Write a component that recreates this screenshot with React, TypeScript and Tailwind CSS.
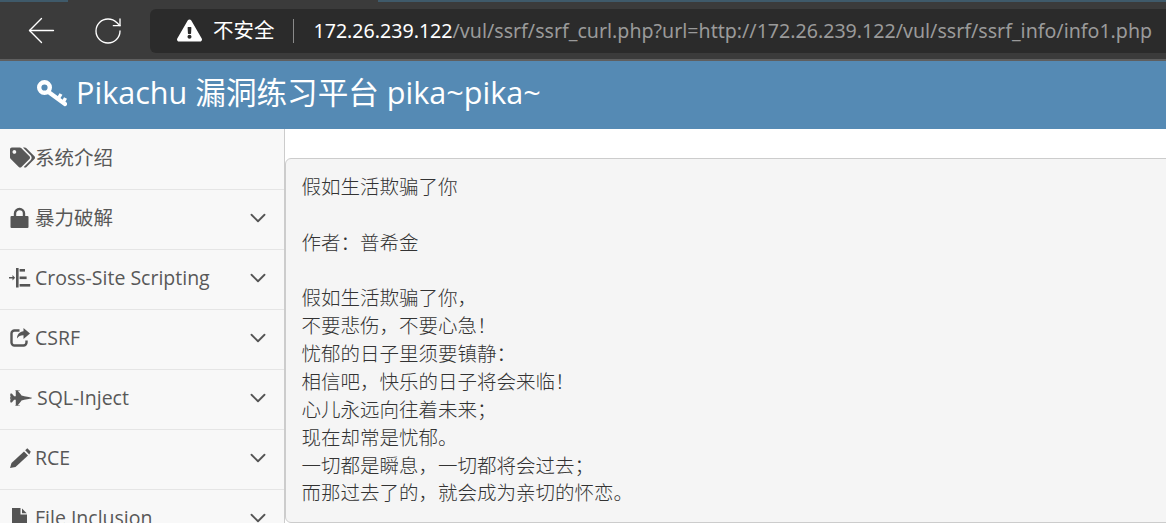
import { ArrowLeft, ChevronDown, RotateCw } from "lucide-react";
import { FaExclamationTriangle, FaFighterJet, FaTags } from "react-icons/fa";
import type { ReactNode } from "react";

const LockIcon = () => (
  <svg viewBox="0 0 19 21" className="h-[21px] w-[19px]" fill="#555">
    <path d="M5 9V6.5a4.5 4.5 0 0 1 9 0V9" fill="none" stroke="#555" strokeWidth="2.4" />
    <rect x="0.5" y="9" width="18" height="12" rx="1" />
  </svg>
);

const IndentIcon = () => (
  <svg viewBox="0 0 22 20" className="-ml-px h-[20px] w-[22px]" fill="#555">
    <rect x="0" y="9" width="4" height="1.5" />
    <path d="M3.5 7l2.6 2.8-2.6 2.8z" />
    <rect x="7" y="0" width="2.6" height="19.5" />
    <rect x="10.6" y="1" width="5.4" height="2.6" />
    <rect x="10.6" y="8.5" width="7" height="2.6" />
    <rect x="10.6" y="16" width="10.6" height="2.6" />
  </svg>
);

const ShareIcon = () => (
  <svg viewBox="0 0 20 20" className="h-[20px] w-[20px]" fill="#555">
    <path d="M16.5 12.5v2a3 3 0 0 1-3 3h-9a3 3 0 0 1-3-3v-9a3 3 0 0 1 3-3h5" fill="none" stroke="#555" strokeWidth="2.4" />
    <path d="M20 5.5L13.5 0v3.2C9.5 3.500 7 6.500 7 10.500c1.700-2.400 3.700-3.300 6.500-3.200V11z" />
  </svg>
);

const PencilIcon = () => (
  <svg viewBox="0 0 21 20" className="h-[20px] w-[21px]" fill="#555">
    <path d="M0 20l1.500-5L14 3.500l4 4L5.500 19z" />
    <path d="M15.200 2.300L17.300 0.300l3.500 3.400L19.200 6.500z" />
  </svg>
);

const FileIcon = () => (
  <svg viewBox="0 0 15 20" className="ml-[2px] h-[20px] w-[15px]" fill="#555">
    <path d="M0 0h8.500v6.500H15V20H0z" />
    <path d="M10 0.500l4.700 4.700H10z" />
  </svg>
);

const KeyIcon = () => (
  <svg viewBox="0 0 30 28" className="h-[28px] w-[30px]" fill="none" stroke="#fff">
    <circle cx="7.500" cy="8.500" r="5.300" strokeWidth="4.400" />
    <path d="M11.500 13L28 25" strokeWidth="4.200" strokeLinecap="round" />
    <path d="M21 20l3-5M26 23.500l2.500-4.500" strokeWidth="3.400" />
  </svg>
);

type Item = { icon: ReactNode; label: string; gap: string; arrow: boolean; rowH: string };

const items: Item[] = [
  { icon: <FaTags className="h-[21px] w-[25px]" />, label: "系统介绍", gap: "ml-0", arrow: false, rowH: "h-[61px] pb-[3px]" },
  { icon: <LockIcon />, label: "暴力破解", gap: "ml-[6px]", arrow: true, rowH: "h-[60px] pb-[4px]" },
  { icon: <IndentIcon />, label: "Cross-Site Scripting", gap: "ml-[4px]", arrow: true, rowH: "h-[60px] pb-[4px]" },
  { icon: <ShareIcon />, label: "CSRF", gap: "ml-[5px]", arrow: true, rowH: "h-[60px] pb-[4px]" },
  { icon: <FaFighterJet className="h-[20px] w-[22px]" />, label: "SQL-Inject", gap: "ml-[5px]", arrow: true, rowH: "h-[60px] pb-[4px]" },
  { icon: <PencilIcon />, label: "RCE", gap: "ml-[4px]", arrow: true, rowH: "h-[60px] pb-[4px]" },
  { icon: <FileIcon />, label: "File Inclusion", gap: "ml-[8px]", arrow: true, rowH: "h-[60px] pb-[4px]" },
];

const poem = `假如生活欺骗了你

作者：普希金

假如生活欺骗了你，
不要悲伤，不要心急！
忧郁的日子里须要镇静：
相信吧，快乐的日子将会来临！
心儿永远向往着未来；
现在却常是忧郁。
一切都是瞬息，一切都将会过去；
而那过去了的，就会成为亲切的怀恋。`;

export default function App() {
  return (
    <div className="h-[523px] w-[1166px] overflow-hidden bg-white font-['Open_Sans','Noto_Sans_CJK_SC',sans-serif]">
      {/* browser toolbar */}
      <div className="border-b-2 border-[#5f5f5f] bg-[#3b3b3b]">
        <div className="flex h-[2px]">
          <div className="w-[68px] bg-[#3f5a6a]" />
          <div className="w-[310px]" />
          <div className="flex-1 bg-[#3f5a6a]" />
        </div>
        <div className="flex h-[57px] items-center">
          <ArrowLeft className="ml-[21px] h-[41px] w-[41px] text-white" strokeWidth={0.8} />
          <RotateCw className="ml-[30px] h-[32px] w-[32px] text-white" strokeWidth={1} />
          <div className="ml-[26px] flex h-[44px] flex-1 items-center rounded-l-[6px] bg-[#2b2b2b] pl-[27px] font-['Noto_Sans','Noto_Sans_CJK_SC',sans-serif]">
            <FaExclamationTriangle className="h-[23px] w-[25px] text-white" />
            <span className="ml-[11px] text-[20.5px] text-white">不安全</span>
            <span className="ml-[18px] h-[24px] w-px bg-[#8a8a8a]" />
            <span className="ml-[20px] text-[19.6px] whitespace-nowrap text-white">
              172.26.239.122
              <span className="text-[#9a9a9a]">/vul/ssrf/ssrf_curl.php?url=http://172.26.239.122/vul/ssrf/ssrf_info/info1.php</span>
            </span>
          </div>
        </div>
      </div>

      {/* site header */}
      <div className="flex h-[68px] items-center bg-[#558ab4] pb-[5px] pl-[37px] text-white">
        <KeyIcon />
        <span className="ml-[9px] text-[30.6px] leading-none whitespace-nowrap">Pikachu 漏洞练习平台 pika~pika~</span>
      </div>

      <div className="flex">
        {/* sidebar */}
        <div className="w-[285px] shrink-0 border-r border-[#cccccc] bg-[#f8f8f8]">
          {items.map((item) => (
            <div key={item.label} className={`${item.rowH} flex items-center border-b border-[#e5e5e5] pr-[13px] pl-[10px] text-[#585858]`}>
              {item.icon}
              <span className={`${item.gap} flex-1 text-[19.5px] whitespace-nowrap`}>{item.label}</span>
              {item.arrow && <ChevronDown className="h-[26px] w-[26px] text-[#555]" strokeWidth={1.7} />}
            </div>
          ))}
        </div>

        {/* content */}
        <div className="min-w-0 flex-1 pt-[29px]">
          <pre className="h-[365px] w-[1000px] rounded-[6px] border border-[#cccccc] bg-[#f5f5f5] pt-[13px] pl-[15.5px] font-['Noto_Sans_CJK_SC',sans-serif] text-[19.5px] leading-[27.86px] font-light text-[#333]">
            {poem}
          </pre>
        </div>
      </div>
    </div>
  );
}
